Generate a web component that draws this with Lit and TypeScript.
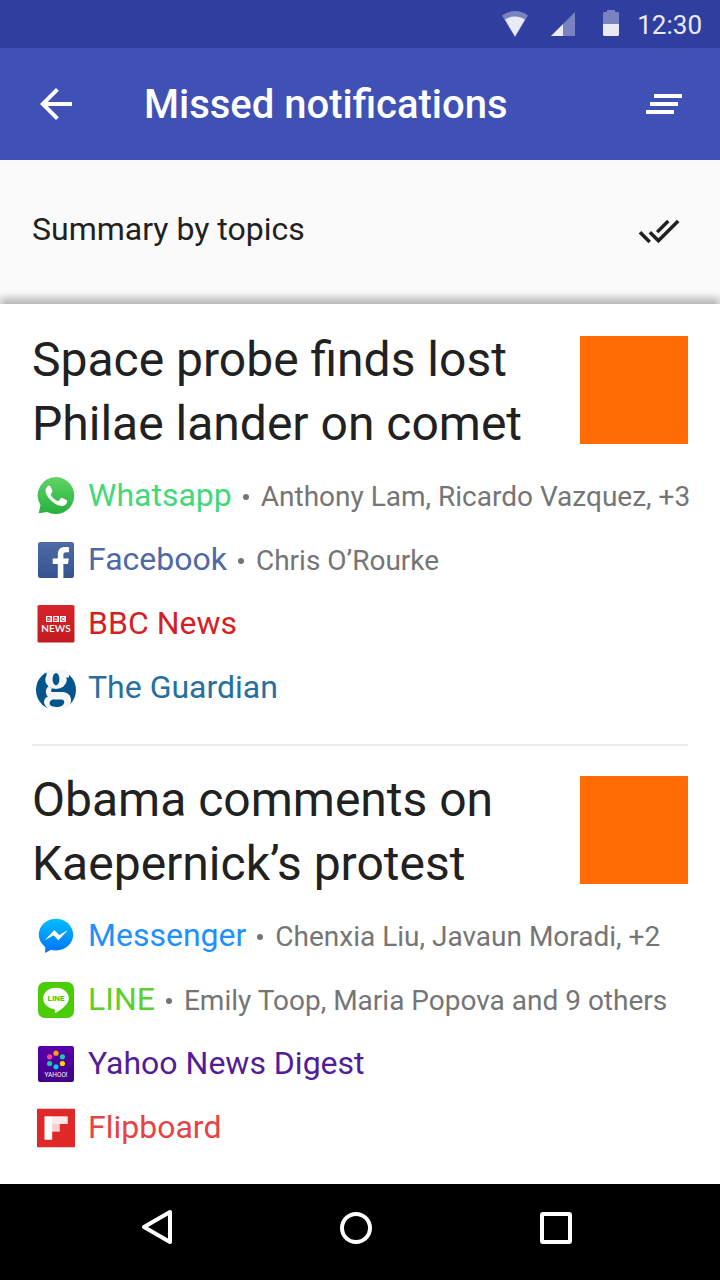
import { LitElement, html, svg, css, nothing } from "lit";
import type { TemplateResult } from "lit";
import { customElement, property } from "lit/decorators.js";

interface Source {
  id: string;
  name: string;
  people?: string;
}

interface Topic {
  title: string;
  sources: Source[];
}

const TOPICS: Topic[] = [
  {
    title: "Space probe finds lost Philae lander on comet",
    sources: [
      { id: "whatsapp", name: "Whatsapp", people: "Anthony Lam, Ricardo Vazquez, +3" },
      { id: "facebook", name: "Facebook", people: "Chris O’Rourke" },
      { id: "bbc", name: "BBC News" },
      { id: "guardian", name: "The Guardian" },
    ],
  },
  {
    title: "Obama comments on Kaepernick’s protest",
    sources: [
      { id: "messenger", name: "Messenger", people: "Chenxia Liu, Javaun Moradi, +2" },
      { id: "line", name: "LINE", people: "Emily Toop, Maria Popova and 9 others" },
      { id: "yahoo", name: "Yahoo News Digest" },
      { id: "flipboard", name: "Flipboard" },
    ],
  },
];

const LOGOS: Record<string, TemplateResult> = {
  whatsapp: svg`
    <defs><linearGradient id="wa" x2="0" y2="1"><stop stop-color="#5fd467"/><stop offset="1" stop-color="#27b03c"/></linearGradient></defs>
    <path fill="url(#wa)" d="M20 1a18.500 18.500 0 1 1-8.800 34.900L2.700 37.200l1.800-8A18.500 18.500 0 0 1 20 1z"/>
    <path fill="#fff" d="M11.600 10.200c.9-.9 2.200-.9 2.800.2l2 4.200c.4.900-.2 1.700-1.500 3.300-.4.500-.3.900 0 1.400 1.500 2.600 3.700 4.400 6.500 5.600.6.300 1 .2 1.500-.4l1.700-2.100c.5-.6 1-.7 1.700-.3l4 2c.8.400 1 .8.800 1.900-.5 2.700-3.200 4.200-5.400 4.100-3.700-.2-7.900-2.500-11.400-6.300-3.400-3.700-4.700-6.500-4.700-9.100 0-1.800.8-3.400 2-4.500z"/>`,
  facebook: svg`
    <defs><linearGradient id="fb" x2="0" y2="1"><stop stop-color="#4f6ba6"/><stop offset="1" stop-color="#37538f"/></linearGradient></defs>
    <rect x="2" y="2" width="36" height="36" rx="2.500" fill="url(#fb)"/>
    <path fill="#fff" d="M21.800 38V24h-5.100v-5.500h5.100v-4.200c0-4.700 2.700-7.300 7-7.300 2 0 3.700.2 4.200.3v4.900h-2.900c-2.300 0-2.700 1.100-2.700 2.700v3.600h5.400l-.8 5.500h-4.600v14z"/>`,
  bbc: svg`
    <defs><linearGradient id="bbc" x2="0" y2="1"><stop stop-color="#d8242c"/><stop offset="1" stop-color="#c01b20"/></linearGradient></defs>
    <rect x="1.500" y="1" width="37" height="37.500" rx="1.500" fill="url(#bbc)"/>
    <path fill="#fff" d="M10 12h6v6h-6zM17 12h6v6h-6zM24 12h6v6h-6z"/>
    <g font-family="Roboto, sans-serif" text-anchor="middle"><text font-size="6" font-weight="700" fill="#d0232a" y="17.200"><tspan x="13">B</tspan><tspan x="20">B</tspan><tspan x="27">C</tspan></text>
    <text x="20" y="28.200" font-size="10" font-weight="600" fill="#fff" font-family="Lato, sans-serif">NEWS</text></g>`,
  guardian: svg`
    <circle cx="20" cy="22" r="20" fill="#00568c"/>
    <g fill="#f6f6f6">
      <path d="M10.500 2h20v7h-20z"/>
      <ellipse cx="20" cy="12" rx="10.800" ry="9"/>
      <path d="M28 5.500l5-1v5h-5z"/>
      <path d="M13 18c-3.500 2-4.500 7.500-1 10.500-3.600 1.200-5.200 5.500-3 8.500 2 4 7 5.800 12 5.800s10.500-2.300 13-6.300c3-6-.5-12.500-7.500-12.500H16.500c-1.700 0-1.900-1.800-.5-3.200z"/>
    </g>
    <g fill="#00568c"><ellipse cx="20" cy="11.200" rx="3.400" ry="6.200"/><path d="M16.500 31.500h9c3.500 0 3.500 4.500.5 6.200-3.500 1.800-8.500 1.500-11 .1-2.500-1.500-1.500-5.300 1.500-6.300z"/></g>`,
  messenger: svg`
    <defs><linearGradient id="ms" x2="0" y2="1"><stop stop-color="#00c0ff"/><stop offset="1" stop-color="#0072ff"/></linearGradient></defs>
    <path fill="url(#ms)" d="M20 2.700c9.500 0 17.200 7 17.200 15.900S29.500 34.500 20 34.500c-1.800 0-3.500-.2-5.100-.7L9.200 37v-6.100C5.300 28 2.800 23.600 2.800 18.600 2.800 9.700 10.500 2.700 20 2.700z"/>
    <path fill="#fff" d="m8.800 24.300 9.500-10.200 4.900 5 8.700-5L22.400 24.300l-4.700-5z"/>`,
  line: svg`
    <rect x="2" y="2" width="36" height="36" rx="6.500" fill="#4acd05"/>
    <path fill="#fff" d="M20 7.800c7.100 0 12.800 4.700 12.800 10.500 0 5-4.900 9.500-12.300 14.200-1.700 1.100-1.800.6-1.600-1.200.3-2-.1-2.200-1.500-2.400-5.800-.8-10.200-5.200-10.200-10.600C7.200 12.500 12.900 7.800 20 7.800z"/>
    <text x="20" y="21.400" text-anchor="middle" font-family="Roboto, sans-serif" font-weight="800" font-size="8" fill="#4acd05">LINE</text>`,
  yahoo: svg`
    <defs><linearGradient id="yh" x2="0" y2="1"><stop stop-color="#5800ad"/><stop offset="1" stop-color="#400084"/></linearGradient></defs>
    <rect x="2" y="2" width="36" height="36" rx="2" fill="url(#yh)"/>
    <circle cx="20" cy="9.200" r="2.600" fill="#ff9d00"/><circle cx="26.400" cy="12.800" r="2.600" fill="#14cda5"/>
    <circle cx="26.400" cy="19.500" r="2.600" fill="#ffd500"/><circle cx="20" cy="22.800" r="2.600" fill="#00c8ff"/>
    <circle cx="13.600" cy="19.500" r="2.600" fill="#14cda5"/><circle cx="13.600" cy="12.800" r="2.600" fill="#ff3d8b"/>
    <text x="20" y="32.800" text-anchor="middle" font-family="Roboto, sans-serif" font-size="6.500" fill="#fff">YAHOO!</text>`,
  flipboard: svg`
    <path fill="#e12828" d="M1 .8h38v38.500H1z"/>
    <path fill="#fff" d="M8.500 8.300h7.700v23.400H8.500z"/><path fill="#fff" d="M16 8.300h15.700V16H16z" opacity=".9"/>
    <path fill="#fff" opacity=".78" d="M16 16h7.800v7.700H16z"/>`,
};

@customElement("source-row")
class SourceRow extends LitElement {
  @property({ attribute: false }) source!: Source;

  static styles = css`
    :host { display: block; }
    .row {
      display: flex; align-items: center; height: 64px; padding-left: 4px;
      color: inherit; text-decoration: none; white-space: nowrap;
    }
    .logo { flex: none; width: 40px; height: 40px; margin-right: 12px; }
    .text { display: flex; align-items: baseline; min-width: 0; padding-bottom: 2px; }
    .name { font-size: 32px; line-height: 40px; }
    .dot { flex: none; align-self: center; width: 6px; height: 6px; margin: 4px 12px 0 11px; border-radius: 50%; background: #757575; }
    .people { font-size: 28px; line-height: 32px; color: #757575; }
    .whatsapp { color: #43d87a; }
    .facebook { color: #4e69a5; }
    .bbc { color: #d41f26; }
    .guardian { color: #25709f; }
    .messenger { color: #1e90ff; }
    .line { color: #5bd02a; }
    .yahoo { color: #511d99; }
    .flipboard { color: #e54345; }
  `;

  render() {
    const { id, name, people } = this.source;
    return html`<a class="row" href="#${id}">
      <svg class="logo" viewBox="0 0 40 40" aria-hidden="true">${LOGOS[id]}</svg>
      <span class="text">
        <span class="name ${id}">${name}</span>
        ${people ? html`<span class="dot"></span><span class="people">${people}</span>` : nothing}
      </span>
    </a>`;
  }
}

@customElement("topic-card")
class TopicCard extends LitElement {
  @property({ attribute: false }) topic!: Topic;

  static styles = css`
    :host { display: block; margin: 0 32px; padding: 24px 0; }
    .head { display: flex; justify-content: space-between; gap: 32px; margin-bottom: 8px; }
    .title { flex: 1; max-width: 512px; margin: 0; font-size: 48px; line-height: 64px; font-weight: 400; color: #212121; }
    .thumb { flex: none; width: 108px; height: 108px; margin-top: 8px; background: #ff6c04; }
  `;

  render() {
    return html`
      <div class="head">
        <h2 class="title">${this.topic.title}</h2>
        <div class="thumb"></div>
      </div>
      ${this.topic.sources.map((s) => html`<source-row .source=${s}></source-row>`)}
    `;
  }
}

@customElement("app-root")
class AppRoot extends LitElement {
  static styles = css`
    :host {
      display: flex; flex-direction: column; min-height: 100vh;
      font-family: Roboto, sans-serif; color: #212121; background: #fff;
    }
    button { display: flex; align-items: center; justify-content: center; padding: 0; border: 0; background: none; color: inherit; cursor: pointer; }
    .status {
      display: flex; align-items: center; justify-content: flex-end; height: 48px; padding-right: 18px;
      background: #303f9f; color: #e8eaf5; font-size: 26px; line-height: 32px;
    }
    .time { padding-top: 2px; }
    .wifi { width: 26px; height: 28px; margin-right: 23px; }
    .signal { width: 24px; height: 28px; margin-right: 28px; }
    .battery { width: 16px; height: 28px; margin-right: 18px; }
    .bar { display: flex; align-items: center; height: 112px; padding: 0 32px; background: #3f51b5; color: #fff; }
    .title { flex: 1; margin: 0 0 0 64px; padding-top: 2px; font-size: 40px; line-height: 48px; font-weight: 500; }
    .icon { width: 48px; height: 48px; fill: currentColor; }
    .summary { display: flex; align-items: center; justify-content: space-between; height: 144px; padding: 0 40px 2px 32px; box-sizing: border-box; background: #fafafa; }
    .subtitle { margin: 0 0 4px; font-size: 32px; line-height: 40px; font-weight: 400; }
    .check { width: 42px; height: 42px; fill: currentColor; }
    .topics { flex: 1; background: #fff; box-shadow: 0 -6px 8px rgba(0, 0, 0, 0.27); }
    .second { border-top: 2px solid #ebebeb; padding-top: 22px; }
    .nav { position: relative; display: flex; justify-content: center; height: 96px; padding: 0 64px 8px 56px; box-sizing: border-box; background: #000; color: #fff; }
    .nav button { flex: 1; }
    .key { width: 48px; height: 48px; fill: none; stroke: currentColor; stroke-width: 4; stroke-linejoin: round; }
  `;

  render() {
    return html`
      <div class="status">
        <svg class="wifi" viewBox="0 0 26 28" fill="currentColor" aria-hidden="true">
          <path opacity=".4" d="M0 5.600C7.500-.5 18.500-.5 26 5.600L13 27z"/>
          <path d="M3 9.600C9 5.500 17 5.500 23 9.600L13 26.500z"/>
        </svg>
        <svg class="signal" viewBox="0 0 24 28" fill="currentColor" aria-hidden="true">
          <path opacity=".4" d="M12 14 24 2v24H12z"/><path d="M12 14v12H0z"/>
        </svg>
        <svg class="battery" viewBox="0 0 16 28" fill="currentColor" aria-hidden="true">
          <path opacity=".4" d="M4 0h8v2h3l1 1v11H0V3l1-1h3z"/><path d="M0 14h16v11l-1 1H1l-1-1z"/>
        </svg>
        <span class="time">12:30</span>
      </div>
      <header class="bar">
        <button aria-label="Back"><svg class="icon" viewBox="0 0 24 24"><path d="M20 11H7.830l5.590-5.590L12 4l-8 8 8 8 1.410-1.410L7.830 13H20v-2z"/></svg></button>
        <h1 class="title">Missed notifications</h1>
        <button aria-label="Clear all"><svg class="icon" viewBox="0 0 24 24"><path d="M5 13h14v-2H5v2zm-2 4h14v-2H3v2zM7 7v2h14V7H7z"/></svg></button>
      </header>
      <section class="summary">
        <p class="subtitle">Summary by topics</p>
        <button aria-label="Mark all as read"><svg class="check" viewBox="0 0 24 24"><path d="M18 7l-1.410-1.410-6.340 6.340 1.410 1.410L18 7zm4.240-1.410L11.660 16.170 7.480 12l-1.410 1.410L11.660 19l12-12-1.420-1.410zM.41 13.410L6 19l1.410-1.410L1.830 12 .41 13.410z"/></svg></button>
      </section>
      <main class="topics">
        ${TOPICS.map((t, i) => html`<topic-card class=${i ? "second" : "first"} .topic=${t}></topic-card>`)}
      </main>
      <nav class="nav">
        <button aria-label="Back"><svg class="key" viewBox="0 0 48 48"><path d="M38 8v30L12 23z"/></svg></button>
        <button aria-label="Home"><svg class="key" viewBox="0 0 48 48"><circle cx="24" cy="24" r="14"/></svg></button>
        <button aria-label="Overview"><svg class="key" viewBox="0 0 48 48"><rect x="10" y="10" width="28" height="28" rx="1"/></svg></button>
      </nav>
    `;
  }
}
